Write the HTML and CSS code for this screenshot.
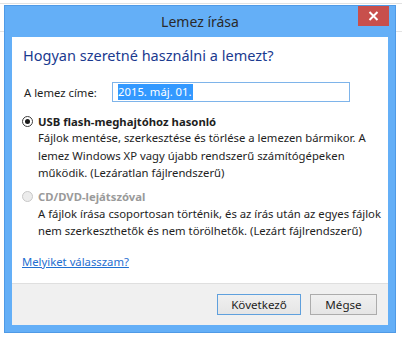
FILE: index.html
```
<!DOCTYPE html>
<html lang="hu">
<head>
    <meta charset="UTF-8">
    <meta name="viewport" content="width=device-width, initial-scale=1.0">
    <title>Lemez írása</title>
    <link rel="stylesheet" href="styles.css">
</head>
<body>

    <!-- Desktop behind the dialog -->
    <div class="desktop">

        <!-- Dialog window -->
        <div class="window">
            <div class="titlebar">
                <span class="title">Lemez írása</span>
                <span class="close">
                    <svg width="11" height="10" viewBox="0 0 11 10">
                        <path d="M1.5 1 L9.5 9 M9.5 1 L1.5 9" stroke="#fff" stroke-width="2"/>
                    </svg>
                </span>
            </div>

            <div class="client">
                <div class="content">
                    <h1>Hogyan szeretné használni a lemezt?</h1>

                    <div class="name-row">
                        <label class="name-label">A lemez címe:</label>
                        <div class="textbox"><span class="selected">2015. máj. 01.</span></div>
                    </div>

                    <div class="option">
                        <div class="option-head">
                            <span class="radio checked"></span>
                            <span class="option-title">USB flash-meghajtóhoz hasonló</span>
                        </div>
                        <p class="option-desc">Fájlok mentése, szerkesztése és törlése a lemezen bármikor. A lemez Windows XP vagy újabb rendszerű számítógépeken működik. (Lezáratlan fájlrendszerű)</p>
                    </div>

                    <div class="option disabled">
                        <div class="option-head">
                            <span class="radio"></span>
                            <span class="option-title">CD/DVD-lejátszóval</span>
                        </div>
                        <p class="option-desc">A fájlok írása csoportosan történik, és az írás után az egyes fájlok nem szerkeszthetők és nem törölhetők. (Lezárt fájlrendszerű)</p>
                    </div>

                    <a href="#" class="help-link">Melyiket válasszam?</a>
                </div>

                <div class="footer">
                    <button class="btn default">Következő</button>
                    <button class="btn">Mégse</button>
                </div>
            </div>
        </div>

    </div>

</body>
</html>
```

FILE: styles.css
```
body {
    margin: 0;
    padding: 0;
    background-color: #fff;
    font-family: "Noto Sans", "DejaVu Sans", sans-serif;
    font-size: 11.3px;
    color: #1e1e1e;
    overflow: hidden;
}

/* Desktop */
.desktop {
    height: 335px;
    margin-top: 3px;
    border-top: 1px solid #e2e2e2;
    padding: 1px 0 0 4px;
    background-image: linear-gradient(#e4e4e4, #e4e4e4);
    background-size: 100% 1px;
    background-position: 0 27px;
    background-repeat: no-repeat;
}

/* Window frame */
.window {
    width: 390px;
    height: 326px;
    background-color: #64aff7;
    border: 1px solid #4f9ae6;
    display: flex;
    flex-direction: column;
}

.titlebar {
    height: 31px;
    flex: none;
    display: flex;
    justify-content: center;
    align-items: center;
    position: relative;
}

.title {
    font-size: 14px;
    color: #2a2a2a;
    margin-top: -1px;
}

.close {
    position: absolute;
    top: 0;
    right: 6px;
    width: 31px;
    height: 20px;
    background-color: #c84f4c;
    display: flex;
    justify-content: center;
    align-items: center;
}

/* Client area */
.client {
    margin: 0 7px 7px 7px;
    flex: 1;
    min-height: 0;
    background-color: #fff;
    display: flex;
    flex-direction: column;
}

.content {
    flex: 1;
    min-height: 0;
    padding: 0 10px;
}

h1 {
    font-size: 14.5px;
    font-weight: normal;
    color: #1a3a8f;
    margin: 9px 0 0 1px;
    line-height: 18px;
}

.name-row {
    display: flex;
    align-items: center;
    margin-top: 18px;
}

.name-label {
    width: 88px;
    padding-left: 2px;
}

.textbox {
    width: 231px;
    height: 18px;
    border: 1px solid #7eb4ea;
    display: flex;
    align-items: center;
    padding-left: 5px;
}

.selected {
    background-color: #3399ff;
    color: #fff;
    line-height: 16px;
    padding-right: 1px;
}

/* Radio options */
.option {
    margin-top: 11px;
}

.option + .option {
    margin-top: 7px;
}

.option-head {
    display: flex;
    align-items: center;
    height: 16px;
}

.radio {
    width: 11px;
    height: 11px;
    border: 1px solid #3c3c3c;
    border-radius: 50%;
    box-sizing: border-box;
    background: #fff;
    margin-right: 5px;
    position: relative;
}

.radio.checked::after {
    content: "";
    position: absolute;
    top: 2px;
    left: 2px;
    width: 5px;
    height: 5px;
    border-radius: 50%;
    background-color: #1a1a1a;
}

.option-title {
    font-weight: bold;
}

.option-desc {
    margin: 0 0 0 16px;
    line-height: 17.5px;
    width: 350px;
}

.disabled .radio {
    border-color: #c8c8c8;
    background: #ececec;
}

.disabled .option-title {
    color: #9a9a9a;
}

.help-link {
    display: inline-block;
    margin-top: 13px;
    line-height: 17px;
    color: #1f6fd1;
}

/* Button strip */
.footer {
    height: 42px;
    flex: none;
    border-top: 1px solid #dfdfdf;
    background-color: #f0f0f0;
    display: flex;
    justify-content: flex-end;
    align-items: flex-start;
    gap: 9px;
    padding: 10px 11px 0 0;
    box-sizing: border-box;
}

.btn {
    height: 21px;
    padding: 0;
    font-family: inherit;
    font-size: 11.6px;
    color: #1e1e1e;
    background: linear-gradient(#f0f0f0, #e5e5e5);
    border: 1px solid #acacac;
}

.btn.default {
    width: 84px;
    border-color: #5fa0dd;
}

.btn:not(.default) {
    width: 67px;
}
```
